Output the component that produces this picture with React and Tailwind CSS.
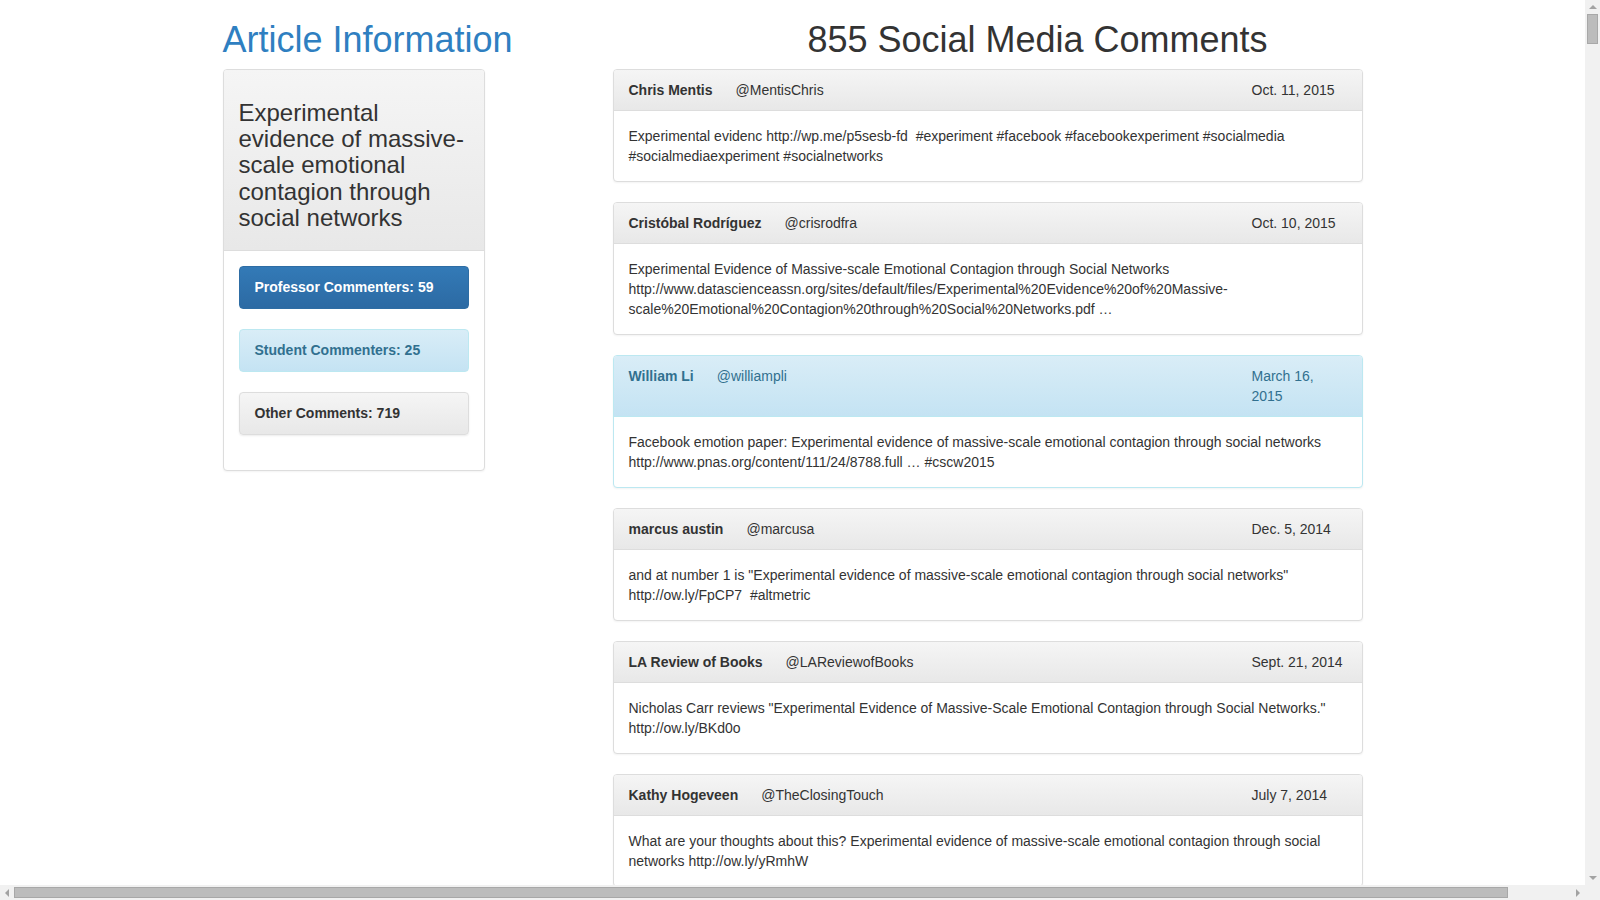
const comments = [
  {
    name: 'Chris Mentis',
    handle: '@MentisChris',
    date: 'Oct. 11, 2015',
    text: 'Experimental evidenc http://wp.me/p5sesb-fd \u00a0#experiment #facebook #facebookexperiment #socialmedia #socialmediaexperiment #socialnetworks',
  },
  {
    name: 'Cristóbal Rodríguez',
    handle: '@crisrodfra',
    date: 'Oct. 10, 2015',
    text: 'Experimental Evidence of Massive-scale Emotional Contagion through Social Networks http://www.datascienceassn.org/sites/default/files/Experimental%20Evidence%20of%20Massive-scale%20Emotional%20Contagion%20through%20Social%20Networks.pdf …',
  },
  {
    name: 'William Li',
    handle: '@williampli',
    date: 'March 16, 2015',
    text: 'Facebook emotion paper: Experimental evidence of massive-scale emotional contagion through social networks http://www.pnas.org/content/111/24/8788.full … #cscw2015',
    professor: true,
  },
  {
    name: 'marcus austin',
    handle: '@marcusa',
    date: 'Dec. 5, 2014',
    text: 'and at number 1 is "Experimental evidence of massive-scale emotional contagion through social networks" http://ow.ly/FpCP7 \u00a0#altmetric',
  },
  {
    name: 'LA Review of Books',
    handle: '@LAReviewofBooks',
    date: 'Sept. 21, 2014',
    text: 'Nicholas Carr reviews "Experimental Evidence of Massive-Scale Emotional Contagion through Social Networks." http://ow.ly/BKd0o',
  },
  {
    name: 'Kathy Hogeveen',
    handle: '@TheClosingTouch',
    date: 'July 7, 2014',
    text: 'What are your thoughts about this? Experimental evidence of massive-scale emotional contagion through social networks http://ow.ly/yRmhW',
  },
];

function CommentPanel({ item }) {
  const info = item.professor;
  return (
    <div
      className={
        'mb-[20px] rounded-[4px] border bg-white shadow-[0_1px_2px_rgba(0,0,0,0.05)] ' +
        (info ? 'border-[#bce8f1]' : 'border-[#ddd]')
      }
    >
      <div
        className={
          'flex px-[15px] py-[10px] rounded-t-[3px] border-b leading-[20px] ' +
          (info
            ? 'bg-gradient-to-b from-[#d9edf7] to-[#c4e3f3] border-[#bce8f1] text-[#31708f]'
            : 'bg-gradient-to-b from-[#f5f5f5] to-[#e8e8e8] border-[#ddd] text-[#333]')
        }
      >
        <div className="flex-1">
          <span className="font-bold mr-[23px]">{item.name}</span>
          <span>{item.handle}</span>
        </div>
        <div className="w-[95px] shrink-0">{item.date}</div>
      </div>
      <div className="p-[15px] leading-[20px]">{item.text}</div>
    </div>
  );
}

function Arrow({ dir }) {
  const points = {
    up: '0,4 4,0 8,4',
    down: '0,0 8,0 4,4',
    left: '4,0 4,8 0,4',
    right: '0,0 0,8 4,4',
  }[dir];
  const vertical = dir === 'up' || dir === 'down';
  return (
    <svg width={vertical ? 8 : 4} height={vertical ? 4 : 8} viewBox={vertical ? '0 0 8 4' : '0 0 4 8'}>
      <polygon points={points} fill="#a3a3a3" />
    </svg>
  );
}

export default function App() {
  return (
    <div className="h-screen w-full flex flex-col overflow-hidden bg-white font-['Liberation_Sans',Arial,sans-serif] text-[14px] text-[#333]">
      <div className="flex flex-1 min-h-0">
        <div className="flex-1 min-w-0 overflow-hidden">
          <div className="w-[1170px] mx-auto px-[15px]">
            <div className="flex -mx-[15px]">
              <div className="w-[292.5px] shrink-0 px-[15px]">
                <h1 className="mt-[20px] mb-[9px] whitespace-nowrap text-[36px] leading-[1.1] text-[#2f7fc1]">Article Information</h1>
                <div className="rounded-[4px] border border-[#ddd] bg-white shadow-[0_1px_2px_rgba(0,0,0,0.05)]">
                  <div className="px-[15px] py-[10px] rounded-t-[3px] border-b border-[#ddd] bg-gradient-to-b from-[#f5f5f5] to-[#e8e8e8]">
                    <h3 className="mt-[20px] mb-[8px] text-[24px] leading-[1.1] text-[#333]">
                      Experimental evidence of massive-scale emotional contagion through social networks
                    </h3>
                  </div>
                  <div className="p-[15px] flex flex-col gap-[20px] pb-[35px]">
                    <div className="h-[43px] flex items-center px-[15px] rounded-[4px] border border-[#2e6da4] bg-gradient-to-b from-[#337ab7] to-[#2c6aa3] text-white font-bold">
                      Professor Commenters: 59
                    </div>
                    <div className="h-[43px] flex items-center px-[15px] rounded-[4px] border border-[#bce8f1] bg-gradient-to-b from-[#d9edf7] to-[#c4e3f3] text-[#31708f] font-bold">
                      Student Commenters: 25
                    </div>
                    <div className="h-[43px] flex items-center px-[15px] rounded-[4px] border border-[#ddd] bg-gradient-to-b from-[#f5f5f5] to-[#e8e8e8] text-[#333] font-bold shadow-[0_1px_2px_rgba(0,0,0,0.08)]">
                      Other Comments: 719
                    </div>
                  </div>
                </div>
              </div>
              <div className="ml-[97.5px] w-[780px] shrink-0 px-[15px]">
                <h1 className="w-[850px] mt-[20px] mb-[9px] text-center text-[36px] leading-[1.1] text-[#333]">
                  855 Social Media Comments
                </h1>
                {comments.map((item) => (
                  <CommentPanel key={item.handle} item={item} />
                ))}
              </div>
            </div>
          </div>
        </div>
        <div className="w-[15px] shrink-0 bg-[#f1f1f1] flex flex-col items-center">
          <div className="h-[14px] flex items-center justify-center">
            <Arrow dir="up" />
          </div>
          <div className="w-[11px] h-[30px] bg-[#bcbcbc] border border-[#a8a8a8]" />
          <div className="flex-1" />
          <div className="h-[14px] flex items-center justify-center">
            <Arrow dir="down" />
          </div>
        </div>
      </div>
      <div className="h-[15px] shrink-0 flex items-center bg-[#f1f1f1]">
        <div className="w-[14px] flex justify-center">
          <Arrow dir="left" />
        </div>
        <div className="w-[1494px] h-[11px] bg-[#bcbcbc] border border-[#a8a8a8]" />
        <div className="flex-1" />
        <div className="w-[14px] flex justify-center">
          <Arrow dir="right" />
        </div>
        <div className="w-[15px]" />
      </div>
    </div>
  );
}
